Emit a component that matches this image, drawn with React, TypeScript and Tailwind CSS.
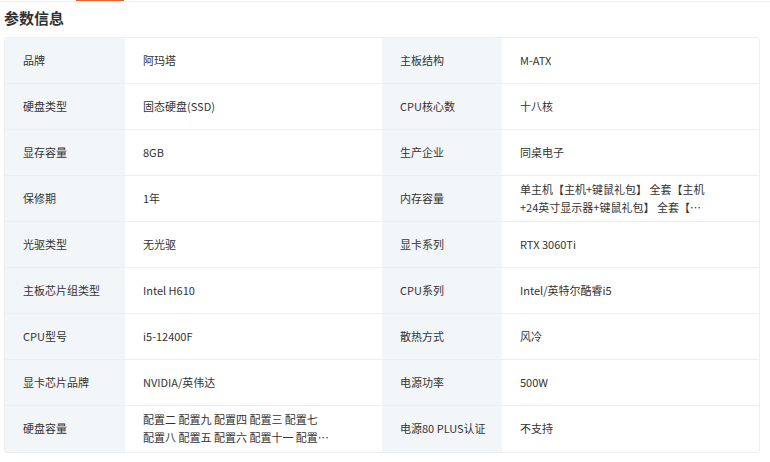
const rows: [string, string, string, string][] = [
  ["品牌", "阿玛塔", "主板结构", "M-ATX"],
  ["硬盘类型", "固态硬盘(SSD)", "CPU核心数", "十八核"],
  ["显存容量", "8GB", "生产企业", "同桌电子"],
  ["保修期", "1年", "内存容量", "单主机【主机+键鼠礼包】 全套【主机+24英寸显示器+键鼠礼包】 全套【主机+27英寸显示器+键鼠礼包】"],
  ["光驱类型", "无光驱", "显卡系列", "RTX 3060Ti"],
  ["主板芯片组类型", "Intel H610", "CPU系列", "Intel/英特尔酷睿i5"],
  ["CPU型号", "i5-12400F", "散热方式", "风冷"],
  ["显卡芯片品牌", "NVIDIA/英伟达", "电源功率", "500W"],
  ["硬盘容量", "配置二 配置九 配置四 配置三 配置七 配置八 配置五 配置六 配置十一 配置十 配置十二", "电源80 PLUS认证", "不支持"],
];

const Cell = ({ text, label, last }: { text: string; label?: boolean; last: boolean }) => (
  <div
    className={`flex h-[46px] items-center pb-[2px] pl-[18px] pr-2 ${label ? "bg-[#f3f6f9]" : "bg-white"} ${
      last ? "" : "border-b border-[#eeeeee]"
    }`}
  >
    <span className="line-clamp-2 max-w-[188px] text-[11px] leading-[18px] text-[#333]">{text}</span>
  </div>
);

export default function App() {
  return (
    <div
      className="h-[462px] w-[770px] bg-white"
      style={{ fontFamily: '"Noto Sans CJK SC", "Noto Sans", sans-serif' }}
    >
      <div className="h-[2px] border-b border-[#eeeeee]">
        <div className="ml-[76px] h-[1px] w-[48px] bg-[#e8622c]" />
      </div>
      <h2 className="ml-[4px] mt-[6px] text-[15px] font-bold leading-[20px] text-[#333]">参数信息</h2>
      <div className="mt-[9px] ml-[4px] w-[756px] overflow-hidden rounded-[3px] border border-[#eeeeee]">
        <div className="grid grid-cols-[120px_257px_120px_257px]">
          {rows.map((r, i) => {
            const last = i === rows.length - 1;
            return [
              <Cell key={`${i}a`} text={r[0]} label last={last} />,
              <Cell key={`${i}b`} text={r[1]} last={last} />,
              <Cell key={`${i}c`} text={r[2]} label last={last} />,
              <Cell key={`${i}d`} text={r[3]} last={last} />,
            ];
          })}
        </div>
      </div>
    </div>
  );
}
